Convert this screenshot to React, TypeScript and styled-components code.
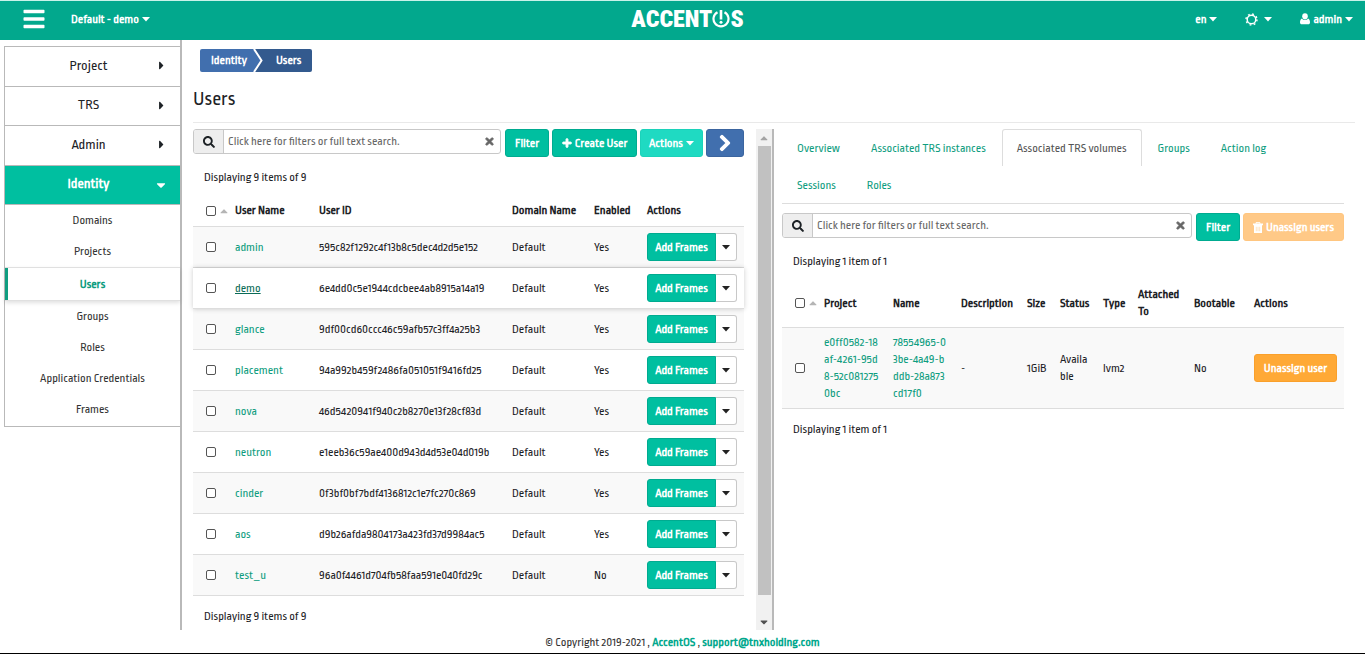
import React from 'react';
import styled, { createGlobalStyle, css } from 'styled-components';
import { FaBars, FaSearch, FaTimes, FaPlus, FaChevronRight, FaCaretDown, FaCaretRight, FaCaretUp } from 'react-icons/fa';

const green = '#00bfa0';
const linkGreen = '#0f9d80';
const line = '#dddddd';

const GlobalStyle = createGlobalStyle`
  *, *::before, *::after { box-sizing: border-box; }
  html, body, #root { height: 100%; }
  body {
    margin: 0;
    background: #fff;
    color: #1d2226;
    font-family: "Ropa Sans", "Roboto Condensed", "Liberation Sans", sans-serif;
    font-size: 12px;
    line-height: 17px;
    overflow: hidden;
  }
  button, input { font: inherit; }
  a { color: ${linkGreen}; text-decoration: none; }
  svg { flex: none; }
`;

const Page = styled.div`
  display: flex;
  flex-direction: column;
  height: 100vh;
  border-bottom: 1px solid #000;
`;

const TopBar = styled.header`
  flex: none;
  display: grid;
  grid-template-columns: 1fr auto 1fr;
  align-items: center;
  height: 40px;
  padding: 0 12px 3px 22px;
  border-top: 1px solid #c9f3ea;
  background: #02a88d;
  color: #fff;
`;

const BarGroup = styled.div<{ $end?: boolean }>`
  display: flex;
  align-items: center;
  justify-content: ${p => (p.$end ? 'flex-end' : 'flex-start')};
  gap: ${p => (p.$end ? 28 : 25)}px;
`;

const BarButton = styled.button<{ $gap?: number }>`
  display: flex;
  align-items: center;
  gap: ${p => p.$gap ?? 3}px;
  padding: 0;
  border: 0;
  background: none;
  color: inherit;
  font-weight: 700;
`;

const Body = styled.div`
  flex: 1;
  display: flex;
  min-height: 0;
`;

const Sidebar = styled.nav`
  flex: none;
  width: 182px;
  padding: 6px 0 0 4px;
  border-right: 2px solid #b9b9b9;
`;

const MenuList = styled.div`
  padding-bottom: 1px;
  border: solid #b9b9b9;
  border-width: 1px 0 1px 1px;
`;

const Sections = styled.div`
  display: grid;
  grid-template-rows: repeat(4, 1fr);
  height: 158px;
`;

const Section = styled.button<{ $open?: boolean }>`
  position: relative;
  width: 100%;
  border: 0;
  border-bottom: 1px solid #b9b9b9;
  padding: 0 8px 2px 0;
  background: ${p => (p.$open ? green : '#fff')};
  color: ${p => (p.$open ? '#fff' : '#1d2226')};
  font-size: 14px;
  font-weight: ${p => (p.$open ? 700 : 400)};
  svg { position: absolute; right: 12px; top: 50%; margin-top: -7px; }
`;

const SubItem = styled.a<{ $active?: boolean }>`
  display: flex;
  align-items: center;
  justify-content: center;
  height: 31px;
  color: #333;
  ${p => p.$active && css`
    height: 34px;
    border: solid #e0e0e0;
    border-width: 1px 0;
    box-shadow: inset 3px 0 ${linkGreen}, 0 2px 4px rgba(0, 0, 0, 0.12);
    color: ${linkGreen};
    font-weight: 700;
  `}
`;

const Main = styled.main`
  flex: 1;
  display: flex;
  flex-direction: column;
  min-width: 0;
  padding: 9px 10px 0 11px;
`;

const Crumbs = styled.ol`
  display: flex;
  align-self: flex-start;
  margin: 0 0 0 7px;
  padding: 0;
  list-style: none;
  border-radius: 2px;
  overflow: hidden;
  font-weight: 700;
`;

const Crumb = styled.li<{ $current?: boolean }>`
  display: flex;
  align-items: center;
  height: 23px;
  padding: ${p => (p.$current ? '0 11px 0 12px' : '0 0 0 11px')};
  background: ${p => (p.$current ? '#335a8e' : '#416fae')};
  a, & { color: #fff; }
  svg { margin-left: 6px; }
`;

const Title = styled.h1`
  margin: 15px 0 11px;
  font-size: 20px;
  font-weight: 400;
  line-height: 24px;
`;

const Split = styled.div`
  flex: 1;
  display: grid;
  grid-template-columns: 1fr 1fr;
  min-height: 0;
  border-top: 1px solid #e9e9e9;
  padding-top: 6px;
`;

const ListPane = styled.section`
  display: flex;
  gap: 12px;
  min-width: 0;
  min-height: 0;
  border-right: 2px solid #b9b9b9;
`;

const PaneContent = styled.div`
  flex: 1;
  min-width: 0;
`;

const DetailPane = styled.section`
  min-width: 0;
  padding: 0 11px 0 8px;
`;

const ScrollRail = styled.div`
  flex: none;
  display: flex;
  flex-direction: column;
  align-items: center;
  width: 16px;
  background: #f1f1f1;
`;

const ScrollArrow = styled.span<{ $muted?: boolean }>`
  display: flex;
  align-items: center;
  height: 17px;
  color: ${p => (p.$muted ? '#a3a3a3' : '#505050')};
`;

const ScrollThumb = styled.div`
  width: 13px;
  flex: 1;
  margin-bottom: 18px;
  background: #c1c1c1;
`;

const Toolbar = styled.div`
  display: flex;
  align-items: flex-start;
  gap: 3px;
`;

const SearchBox = styled.label`
  flex: 1;
  display: flex;
  align-items: center;
  min-width: 0;
  height: 25px;
  margin-right: 1px;
  border: 1px solid #c8c8c8;
  border-radius: 3px;
  overflow: hidden;
  color: #666;
  > svg { margin: 0 5px; }
`;

const SearchIcon = styled.span`
  display: flex;
  align-items: center;
  justify-content: center;
  width: 30px;
  height: 100%;
  border-right: 1px solid #c8c8c8;
  background: #eee;
  color: #1d2226;
`;

const SearchInput = styled.input`
  flex: 1;
  min-width: 0;
  padding: 0 4px;
  border: 0;
  background: none;
  outline: 0;
  &::placeholder { color: #666; opacity: 1; }
`;

type Tone = 'green' | 'teal' | 'blue' | 'orange' | 'pale';
const tones: Record<Tone, [string, string]> = {
  green: [green, '#00ab90'],
  teal: ['#1fdac2', '#1cd2ba'],
  blue: ['#416fae', '#3b659f'],
  orange: ['#ffa936', '#faa02b'],
  pale: ['#ffc987', '#ffc680'],
};

const Button = styled.button<{ $tone: Tone; $width?: number }>`
  flex: none;
  display: inline-flex;
  align-items: center;
  justify-content: center;
  gap: 3px;
  width: ${p => (p.$width ? `${p.$width}px` : 'auto')};
  height: 28px;
  padding: 0;
  border: 1px solid ${p => tones[p.$tone][1]};
  border-radius: 3px;
  background: ${p => tones[p.$tone][0]};
  color: #fff;
  font-weight: 700;
  white-space: nowrap;
`;

const SplitButton = styled.span`
  display: flex;
  ${Button} { border-radius: 3px 0 0 3px; }
`;

const MenuToggle = styled.button`
  display: flex;
  align-items: center;
  justify-content: center;
  width: 21px;
  height: 28px;
  padding: 0;
  border: 1px solid #c8c8c8;
  border-left: 0;
  border-radius: 0 3px 3px 0;
  background: #fff;
  color: #222;
`;

const Count = styled.p`
  margin: 0;
  padding: 12px 11px 0;
`;

const Table = styled.table`
  width: 100%;
  margin-top: 9px;
  border-collapse: separate;
  border-spacing: 0;
  table-layout: fixed;
  th, td {
    padding: 0 0 0 8px;
    text-align: left;
    border-bottom: 1px solid ${line};
  }
  th:first-child, td:first-child { padding-left: 13px; }
  td { height: 41px; }
`;

const HeadRow = styled.tr<{ $tall?: boolean }>`
  th { height: ${p => (p.$tall ? 49 : 32)}px; }
`;

const Row = styled.tr<{ $odd?: boolean; $hover?: boolean; $tall?: boolean }>`
  background: ${p => (p.$odd ? '#f9f9f9' : '#fff')};
  ${p => p.$hover && css`
    position: relative;
    box-shadow: 0 0 5px rgba(0, 0, 0, 0.2);
    td a { color: #0b6b57; text-decoration: underline; }
  `}
  ${p => p.$tall && css`td { height: 81px; }`}
`;

const CheckCell = styled.span`
  display: flex;
  align-items: center;
  gap: 2px;
  color: #b5b5b5;
`;

const Check = styled.input.attrs({ type: 'checkbox' })`
  appearance: none;
  flex: none;
  width: 10px;
  height: 10px;
  margin: 0;
  border: 1px solid #555;
  border-radius: 2px;
  background: #fff;
`;

const Tabs = styled.div`
  display: flex;
  flex-wrap: wrap;
  border-bottom: 1px solid ${line};
  margin-bottom: 9px;
`;

const Tab = styled.a<{ $active?: boolean }>`
  height: 37px;
  margin-right: 1px;
  padding: 10px 14px;
  border: 1px solid ${p => (p.$active ? line : 'transparent')};
  border-bottom: 0;
  border-radius: 3px 3px 0 0;
  color: ${p => (p.$active ? '#555' : linkGreen)};
`;

const Lines = styled.span`
  display: block;
  white-space: pre-line;
`;

const Footer = styled.footer`
  flex: none;
  height: 23px;
  padding-top: 4px;
  text-align: center;
  color: #333;
  a { color: #02a88d; font-weight: 700; }
`;

const LogoText = styled.div`
  display: flex;
  align-items: center;
  font-family: "Roboto Condensed", Roboto, sans-serif;
  font-size: 24px;
  font-weight: 900;
  line-height: 36px;
`;

const Caret = () => (
  <svg width="8" height="5" viewBox="0 0 8 5" fill="currentColor" aria-hidden="true"><path d="M0 0h8L4 4.5z" /></svg>
);

const User = () => (
  <svg width="10" height="12" viewBox="0 0 10 12" fill="currentColor" aria-hidden="true">
    <ellipse cx="5" cy="3.300" rx="2.800" ry="3.100" />
    <path d="M2 5.500c.8 1 1.800 1.500 3 1.500s2.200-.5 3-1.500c1.400.4 2 2 2 4 0 1-.8 1.800-1.700 1.800H1.700C.8 11.300 0 10.500 0 9.500c0-2 .6-3.600 2-4z" />
  </svg>
);

const Gear = () => (
  <svg width="13" height="13" viewBox="0 0 13 13" fill="none" stroke="currentColor" aria-hidden="true">
    <circle cx="6.5" cy="6.5" r="4.300" strokeWidth="1.500" />
    <circle cx="6.5" cy="6.5" r="5.500" strokeWidth="1.400" strokeDasharray="1.800 2.520" />
  </svg>
);

const Trash = () => (
  <svg width="10" height="11" viewBox="0 0 10 11" aria-hidden="true">
    <path d="M3 1.800V.7h4v1.100" fill="none" stroke="currentColor" />
    <path d="M0 1.500h10v1.700H0zM1 3h8v8H1z" fill="currentColor" />
    <path d="M3.300 4.800v4.400M5 4.800v4.400M6.700 4.800v4.400" stroke="#ffc987" strokeWidth=".5" />
  </svg>
);

const PowerMark = () => (
  <svg width="18" height="20" viewBox="0 0 18 20" fill="none" stroke="currentColor" aria-hidden="true">
    <path d="M5.500 3.200a7.500 7.500 0 1 0 7 0" strokeWidth="2.200" />
    <path d="M9 1v9.500" strokeWidth="2.600" />
    <circle cx="9" cy="13.300" r="1.500" fill="currentColor" stroke="none" />
  </svg>
);

const Search = ({ id }: { id: string }) => (
  <SearchBox htmlFor={id}>
    <SearchIcon><FaSearch size={12} /></SearchIcon>
    <SearchInput id={id} aria-label="Search" placeholder="Click here for filters or full text search." />
    <FaTimes size={11} stroke="currentColor" strokeWidth={40} />
  </SearchBox>
);

const users: [string, string, string][] = [
  ['admin', '595c82f1292c4f13b8c5dec4d2d5e152', 'Yes'],
  ['demo', '6e4dd0c5e1944cdcbee4ab8915a14a19', 'Yes'],
  ['glance', '9df00cd60ccc46c59afb57c3ff4a25b3', 'Yes'],
  ['placement', '94a992b459f2486fa051051f9416fd25', 'Yes'],
  ['nova', '46d5420941f940c2b8270e13f28cf83d', 'Yes'],
  ['neutron', 'e1eeb36c59ae400d943d4d53e04d019b', 'Yes'],
  ['cinder', '0f3bf0bf7bdf4136812c1e7fc270c869', 'Yes'],
  ['aos', 'd9b26afda9804173a423fd37d9984ac5', 'Yes'],
  ['test_u', '96a0f4461d704fb58faa591e040fd29c', 'No'],
];

const subItems = ['Domains', 'Projects', 'Users', 'Groups', 'Roles', 'Application Credentials', 'Frames'];
const tabs = ['Overview', 'Associated TRS instances', 'Associated TRS volumes', 'Groups', 'Action log', 'Sessions', 'Roles'];

export default function App() {
  return (
    <Page>
      <GlobalStyle />
      <TopBar>
        <BarGroup>
          <BarButton aria-label="Menu"><FaBars size={24} /></BarButton>
          <BarButton>Default - demo <Caret /></BarButton>
        </BarGroup>
        <LogoText>ACCENT<PowerMark />S</LogoText>
        <BarGroup $end>
          <BarButton>en <Caret /></BarButton>
          <BarButton $gap={6} aria-label="Settings"><Gear /><Caret /></BarButton>
          <BarButton><User /> admin <Caret /></BarButton>
        </BarGroup>
      </TopBar>
      <Body>
        <Sidebar>
          <MenuList>
            <Sections>
              {['Project', 'TRS', 'Admin'].map(name => (
                <Section key={name}>{name}<FaCaretRight size={13} /></Section>
              ))}
              <Section $open>Identity<FaCaretDown size={14} /></Section>
            </Sections>
            {subItems.map(name => (
              <SubItem key={name} href="#" $active={name === 'Users'}>{name}</SubItem>
            ))}
          </MenuList>
        </Sidebar>
        <Main>
          <Crumbs>
            <Crumb>
              <a href="#">Identity</a>
              <svg width="11" height="23" viewBox="0 0 11 23" aria-hidden="true">
                <path d="M1 0h10v23H1l7-11.500z" fill="#335a8e" />
                <path d="M1 0l7.500 11.500L1 23" fill="none" stroke="#fff" strokeWidth="2" />
              </svg>
            </Crumb>
            <Crumb $current>Users</Crumb>
          </Crumbs>
          <Title>Users</Title>
          <Split>
            <ListPane>
              <PaneContent>
                <Toolbar>
                  <Search id="user-search" />
                  <Button $tone="green" $width={44}>Filter</Button>
                  <Button $tone="green" $width={85}><FaPlus size={10} stroke="currentColor" strokeWidth={50} />Create User</Button>
                  <Button $tone="teal" $width={63}>Actions<Caret /></Button>
                  <Button $tone="blue" $width={38} aria-label="Next"><FaChevronRight size={18} stroke="currentColor" strokeWidth={30} /></Button>
                </Toolbar>
                <Count>Displaying 9 items of 9</Count>
                <Table>
                  <colgroup>
                    <col width="34" /><col width="84" /><col /><col width="82" /><col width="53" /><col width="105" />
                  </colgroup>
                  <thead>
                    <HeadRow>
                      <th><CheckCell><Check aria-label="Select all" /><FaCaretUp size={12} /></CheckCell></th>
                      <th>User Name</th><th>User ID</th><th>Domain Name</th><th>Enabled</th><th>Actions</th>
                    </HeadRow>
                  </thead>
                  <tbody>
                    {users.map(([name, id, enabled], i) => (
                      <Row key={id} $odd={i % 2 === 0} $hover={name === 'demo'}>
                        <td><CheckCell><Check aria-label={name} /></CheckCell></td>
                        <td><a href="#">{name}</a></td>
                        <td>{id}</td>
                        <td>Default</td>
                        <td>{enabled}</td>
                        <td>
                          <SplitButton>
                            <Button $tone="green" $width={69}>Add Frames</Button>
                            <MenuToggle aria-label="More actions"><Caret /></MenuToggle>
                          </SplitButton>
                        </td>
                      </Row>
                    ))}
                  </tbody>
                </Table>
                <Count>Displaying 9 items of 9</Count>
              </PaneContent>
              <ScrollRail aria-hidden="true">
                <ScrollArrow $muted><FaCaretUp size={12} /></ScrollArrow>
                <ScrollThumb />
                <ScrollArrow><FaCaretDown size={12} /></ScrollArrow>
              </ScrollRail>
            </ListPane>
            <DetailPane>
              <Tabs>
                {tabs.map(name => (
                  <Tab key={name} href="#" $active={name === 'Associated TRS volumes'}>{name}</Tab>
                ))}
              </Tabs>
              <Toolbar>
                <Search id="volume-search" />
                <Button $tone="green" $width={44}>Filter</Button>
                <Button $tone="pale" $width={101}><Trash />Unassign users</Button>
              </Toolbar>
              <Count>Displaying 1 item of 1</Count>
              <Table>
                <colgroup>
                  <col width="34" /><col width="69" /><col /><col width="66" /><col width="33" /><col width="43" />
                  <col width="35" /><col width="56" /><col width="60" /><col width="98" />
                </colgroup>
                <thead>
                  <HeadRow $tall>
                    <th><CheckCell><Check aria-label="Select all volumes" /><FaCaretUp size={12} /></CheckCell></th>
                    <th>Project</th><th>Name</th><th>Description</th><th>Size</th><th>Status</th>
                    <th>Type</th><th>Attached To</th><th>Bootable</th><th>Actions</th>
                  </HeadRow>
                </thead>
                <tbody>
                  <Row $odd $tall>
                    <td><CheckCell><Check aria-label="Select volume" /></CheckCell></td>
                    <td><a href="#"><Lines>{'e0ff0582-18\naf-4261-95d\n8-52c081275\n0bc'}</Lines></a></td>
                    <td><a href="#"><Lines>{'78554965-0\n3be-4a49-b\nddb-28a873\ncd17f0'}</Lines></a></td>
                    <td>-</td>
                    <td>1GiB</td>
                    <td><Lines>{'Availa\nble'}</Lines></td>
                    <td>lvm2</td>
                    <td />
                    <td>No</td>
                    <td><Button $tone="orange" $width={83}>Unassign user</Button></td>
                  </Row>
                </tbody>
              </Table>
              <Count>Displaying 1 item of 1</Count>
            </DetailPane>
          </Split>
        </Main>
      </Body>
      <Footer>© Copyright 2019-2021 , <a href="#">AccentOS</a> , <a href="#">support@tnxholding.com</a></Footer>
    </Page>
  );
}
